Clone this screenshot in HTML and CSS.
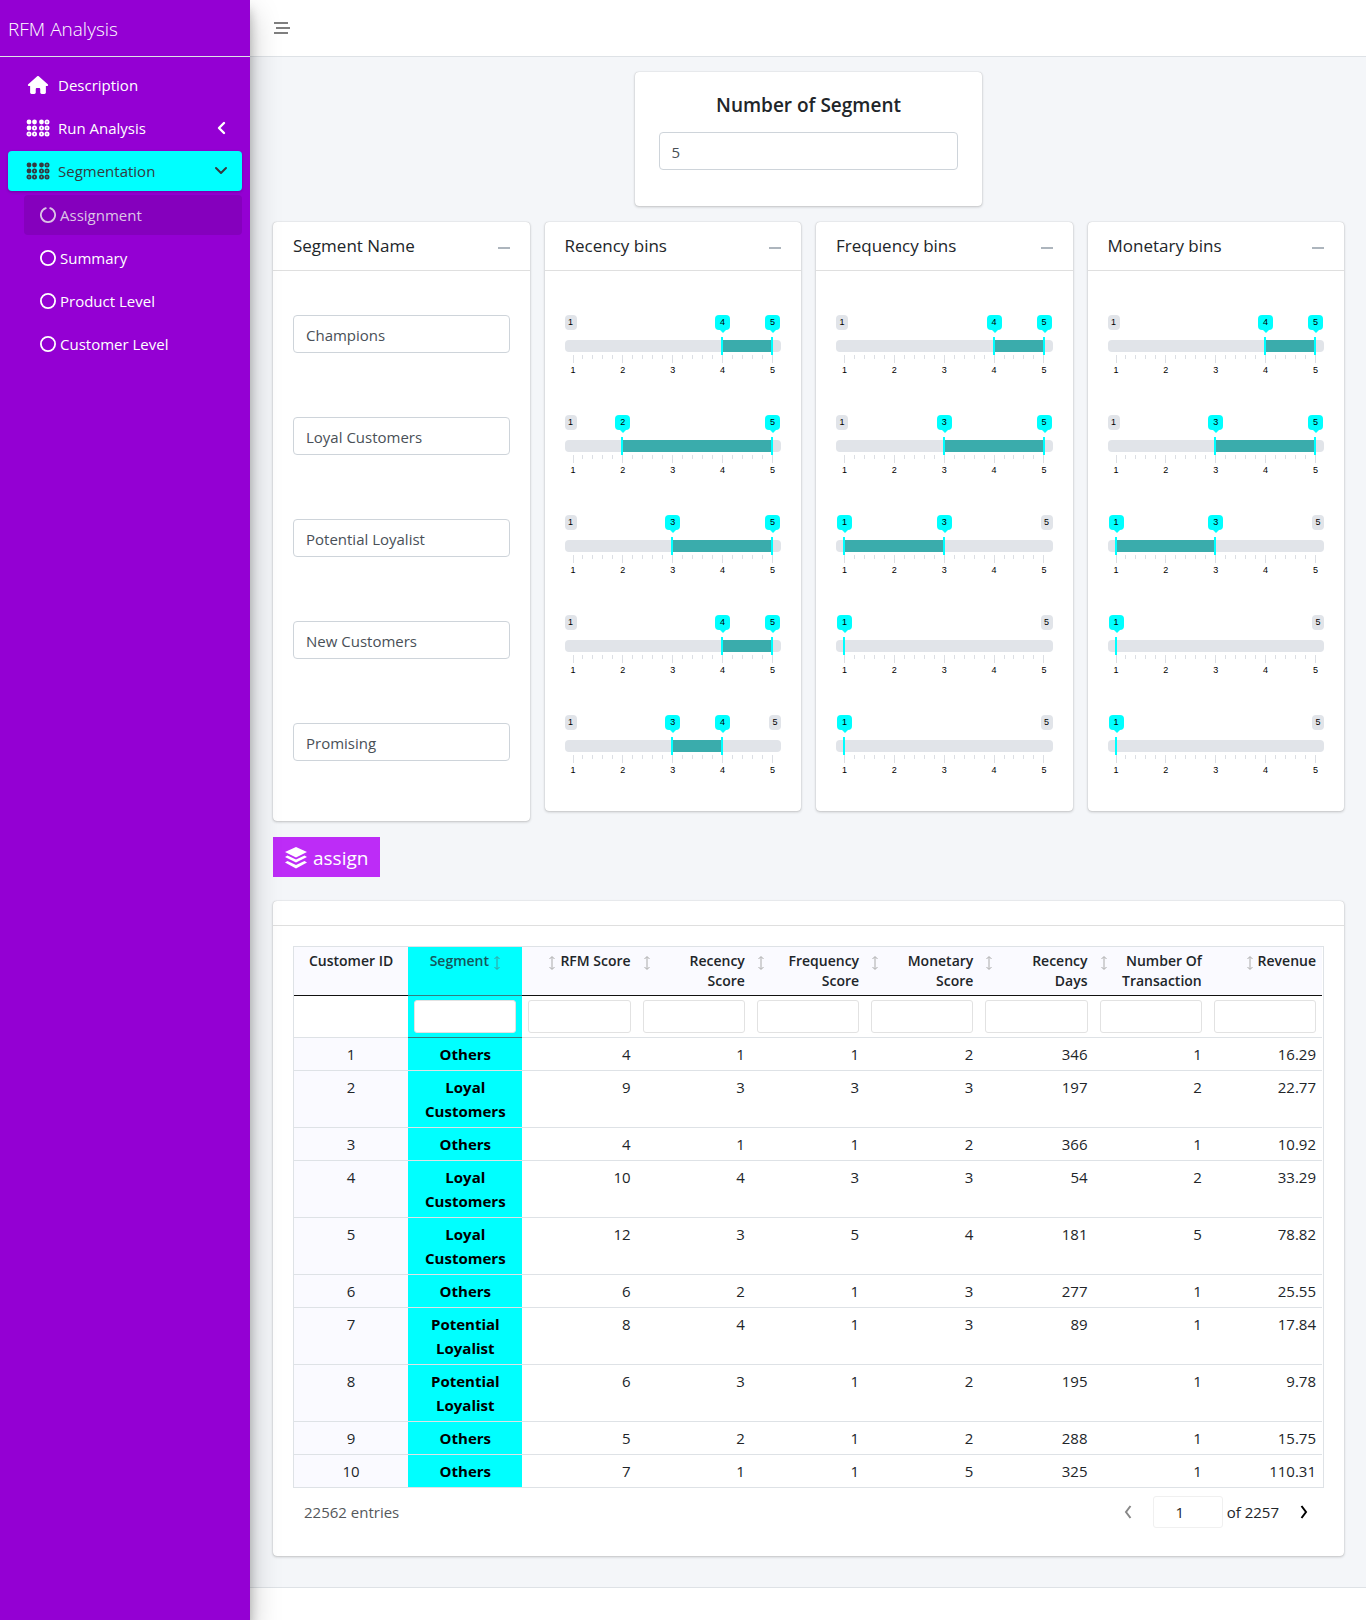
FILE: index.html
```html
<!DOCTYPE html>
<html lang="en">
<head>
<meta charset="utf-8">
<meta name="viewport" content="width=device-width, initial-scale=1">
<title>RFM Analysis</title>
<link rel="stylesheet" href="styles.css">
</head>
<body>
<svg class="sprite" aria-hidden="true">
  <symbol id="i-home" viewBox="0 0 576 512"><path d="M575.8 255.500c0 18-15 32.100-32 32.100h-32l.7 160.200c0 2.700-.2 5.400-.5 8.100V472c0 22.100-17.900 40-40 40H392c-22.100 0-40-17.900-40-40V376c0-17.700-14.300-32-32-32h-64c-17.700 0-32 14.300-32 32v96c0 22.100-17.900 40-40 40h-80c-22.100 0-40-17.900-40-40V287.600H32c-18 0-32-14-32-32.100 0-9 3-17 10-24L266.400 8c7-7 15-8 22-8s15 2 21 7l255.400 224.500c8 7 12 15 11 24z"/></symbol>
  <symbol id="i-left" viewBox="0 0 10 14"><path d="M8 2 3 7l5 5" fill="none" stroke="currentColor" stroke-width="2.400" stroke-linecap="round" stroke-linejoin="round"/></symbol>
  <symbol id="i-down" viewBox="0 0 14 10"><path d="m2 2 5 5 5-5" fill="none" stroke="currentColor" stroke-width="2" stroke-linecap="round" stroke-linejoin="round"/></symbol>
  <symbol id="i-circle" viewBox="0 0 16 16"><circle cx="8" cy="8" r="7.100" fill="none" stroke="currentColor" stroke-width="1.800"/></symbol>
  <symbol id="i-notch" viewBox="0 0 16 16"><path d="M5.800 1.200a7.100 7.100 0 1 0 4.400 0" fill="none" stroke="currentColor" stroke-width="1.800" stroke-linecap="round"/></symbol>
  <symbol id="i-braille" viewBox="0 0 24 18">
    <g fill="currentColor"><circle cx="3" cy="3" r="2.400"/><circle cx="8.500" cy="3" r="2.400"/><circle cx="15.500" cy="3" r="2.400"/><circle cx="3" cy="9" r="2.400"/></g>
    <g fill="none" stroke="currentColor" stroke-width="1.800"><circle cx="21" cy="3" r="1.600"/><circle cx="8.500" cy="9" r="1.600"/><circle cx="15.500" cy="9" r="1.600"/><circle cx="21" cy="9" r="1.600"/><circle cx="3" cy="15" r="1.600"/><circle cx="8.500" cy="15" r="1.600"/><circle cx="15.500" cy="15" r="1.600"/><circle cx="21" cy="15" r="1.600"/></g>
  </symbol>
  <symbol id="i-minus" viewBox="0 0 12 12"><path d="M0 6h12" stroke="currentColor" stroke-width="2"/></symbol>
  <symbol id="i-sort" viewBox="0 0 8 16"><path d="M4 2v12M1.500 4 4 1.500 6.500 4M1.500 12 4 14.500 6.500 12" fill="none" stroke="currentColor" stroke-width="1"/></symbol>
</svg>

<div class="layout">
  <aside class="sidebar">
    <a class="brand" href="#">RFM Analysis</a>
    <nav class="nav">
      <a class="nav-link" href="#"><svg class="nav-icon"><use href="#i-home"/></svg><span>Description</span></a>
      <a class="nav-link" href="#"><svg class="nav-icon"><use href="#i-braille"/></svg><span>Run Analysis</span><svg class="nav-arrow"><use href="#i-left"/></svg></a>
      <a class="nav-link is-open" href="#"><svg class="nav-icon"><use href="#i-braille"/></svg><span>Segmentation</span><svg class="nav-arrow"><use href="#i-down"/></svg></a>
      <div class="subnav">
        <a class="sub-link is-active" href="#"><svg><use href="#i-notch"/></svg>Assignment</a>
        <a class="sub-link" href="#"><svg><use href="#i-circle"/></svg>Summary</a>
        <a class="sub-link" href="#"><svg><use href="#i-circle"/></svg>Product Level</a>
        <a class="sub-link" href="#"><svg><use href="#i-circle"/></svg>Customer Level</a>
      </div>
    </nav>
  </aside>

  <div class="page">
    <header class="topbar">
      <button class="menu" type="button" aria-label="Toggle menu"><svg viewBox="0 0 16 14"><path d="M0 2h14M2 7h14M0 12h14" stroke="currentColor" stroke-width="2"/></svg></button>
    </header>

    <main class="main">
      <section class="card count-card">
        <label class="count-label" for="segments">Number of Segment</label>
        <input class="field" id="segments" type="text" inputmode="numeric" value="5">
      </section>

      <div class="bins">
        <section class="card">
          <div class="card-head"><h2>Segment Name</h2><button type="button" class="collapse" aria-label="Collapse"><svg><use href="#i-minus"/></svg></button></div>
          <div class="names">
            <input class="field" type="text" aria-label="Segment 1" value="Champions">
            <input class="field" type="text" aria-label="Segment 2" value="Loyal Customers">
            <input class="field" type="text" aria-label="Segment 3" value="Potential Loyalist">
            <input class="field" type="text" aria-label="Segment 4" value="New Customers">
            <input class="field" type="text" aria-label="Segment 5" value="Promising">
          </div>
        </section>
        <section class="card">
          <div class="card-head"><h2>Recency bins</h2><button type="button" class="collapse" aria-label="Collapse"><svg><use href="#i-minus"/></svg></button></div>
          <div class="sliders" data-name="Recency" data-ranges="4-5 2-5 3-5 4-5 3-4"></div>
        </section>
        <section class="card">
          <div class="card-head"><h2>Frequency bins</h2><button type="button" class="collapse" aria-label="Collapse"><svg><use href="#i-minus"/></svg></button></div>
          <div class="sliders" data-name="Frequency" data-ranges="4-5 3-5 1-3 1-1 1-1"></div>
        </section>
        <section class="card">
          <div class="card-head"><h2>Monetary bins</h2><button type="button" class="collapse" aria-label="Collapse"><svg><use href="#i-minus"/></svg></button></div>
          <div class="sliders" data-name="Monetary" data-ranges="4-5 3-5 1-3 1-1 1-1"></div>
        </section>
      </div>

      <button class="assign" type="button">
        <svg viewBox="0 0 22 22" fill="currentColor"><path d="M11 0 22 5 11 10.500 0 5z"/><path d="M2.500 8.500 11 12.500l8.500-4L22 10 11 15.500 0 10z"/><path d="M2.500 14 11 18l8.500-4L22 15.500 11 21.500 0 15.500z"/></svg>
        <span>assign</span>
      </button>

      <section class="card table-card">
        <div class="table-head"></div>
        <div class="table-body">
          <div class="frame">
            <table>
              <thead>
                <tr class="titles">
                  <th scope="col" class="id">Customer ID</th>
                  <th scope="col" class="seg"><button type="button"><span>Segment</span><svg><use href="#i-sort"/></svg></button></th>
                  <th scope="col"><button type="button"><svg><use href="#i-sort"/></svg><span>RFM Score</span></button></th>
                  <th scope="col"><button type="button"><svg><use href="#i-sort"/></svg><span>Recency Score</span></button></th>
                  <th scope="col"><button type="button"><svg><use href="#i-sort"/></svg><span>Frequency Score</span></button></th>
                  <th scope="col"><button type="button"><svg><use href="#i-sort"/></svg><span>Monetary Score</span></button></th>
                  <th scope="col"><button type="button"><svg><use href="#i-sort"/></svg><span>Recency Days</span></button></th>
                  <th scope="col"><button type="button"><svg><use href="#i-sort"/></svg><span>Number Of Transaction</span></button></th>
                  <th scope="col"><button type="button"><svg><use href="#i-sort"/></svg><span>Revenue</span></button></th>
                </tr>
                <tr class="filters">
                  <td></td>
                  <td class="seg"><input type="text" aria-label="Filter Segment"></td>
                  <td><input type="text" aria-label="Filter RFM Score"></td>
                  <td><input type="text" aria-label="Filter Recency Score"></td>
                  <td><input type="text" aria-label="Filter Frequency Score"></td>
                  <td><input type="text" aria-label="Filter Monetary Score"></td>
                  <td><input type="text" aria-label="Filter Recency Days"></td>
                  <td><input type="text" aria-label="Filter Number Of Transaction"></td>
                  <td><input type="text" aria-label="Filter Revenue"></td>
                </tr>
              </thead>
              <tbody>
                <tr><td class="id">1</td><td class="seg">Others</td><td>4</td><td>1</td><td>1</td><td>2</td><td>346</td><td>1</td><td>16.29</td></tr>
                <tr><td class="id">2</td><td class="seg">Loyal Customers</td><td>9</td><td>3</td><td>3</td><td>3</td><td>197</td><td>2</td><td>22.77</td></tr>
                <tr><td class="id">3</td><td class="seg">Others</td><td>4</td><td>1</td><td>1</td><td>2</td><td>366</td><td>1</td><td>10.92</td></tr>
                <tr><td class="id">4</td><td class="seg">Loyal Customers</td><td>10</td><td>4</td><td>3</td><td>3</td><td>54</td><td>2</td><td>33.29</td></tr>
                <tr><td class="id">5</td><td class="seg">Loyal Customers</td><td>12</td><td>3</td><td>5</td><td>4</td><td>181</td><td>5</td><td>78.82</td></tr>
                <tr><td class="id">6</td><td class="seg">Others</td><td>6</td><td>2</td><td>1</td><td>3</td><td>277</td><td>1</td><td>25.55</td></tr>
                <tr><td class="id">7</td><td class="seg">Potential Loyalist</td><td>8</td><td>4</td><td>1</td><td>3</td><td>89</td><td>1</td><td>17.84</td></tr>
                <tr><td class="id">8</td><td class="seg">Potential Loyalist</td><td>6</td><td>3</td><td>1</td><td>2</td><td>195</td><td>1</td><td>9.78</td></tr>
                <tr><td class="id">9</td><td class="seg">Others</td><td>5</td><td>2</td><td>1</td><td>2</td><td>288</td><td>1</td><td>15.75</td></tr>
                <tr><td class="id">10</td><td class="seg">Others</td><td>7</td><td>1</td><td>1</td><td>5</td><td>325</td><td>1</td><td>110.31</td></tr>
              </tbody>
            </table>
          </div>
          <div class="pager">
            <span class="entries">22562 entries</span>
            <button type="button" class="step" aria-label="Previous page" disabled><svg viewBox="0 0 8 14"><path d="M6.500 1 2 7l4.500 6" fill="none" stroke="currentColor" stroke-width="2"/></svg></button>
            <input type="text" id="page" inputmode="numeric" aria-label="Page" value="1">
            <label for="page">of 2257</label>
            <button type="button" class="step" aria-label="Next page"><svg viewBox="0 0 8 14"><path d="M1.500 1 6 7l-4.500 6" fill="none" stroke="currentColor" stroke-width="2"/></svg></button>
          </div>
        </div>
      </section>
    </main>
    <footer class="footer"></footer>
  </div>
</div>
<script src="script.js"></script>
</body>
</html>
```
FILE: styles.css
```css
* { box-sizing: border-box; }

body {
  margin: 0;
  font: 15px/24px "Open Sans", "Noto Sans", sans-serif;
  color: #212529;
  background: #f4f6f9;
}

button, input { font: inherit; color: inherit; }
button { border: 0; padding: 0; background: none; cursor: pointer; }
a { color: inherit; text-decoration: none; }
svg { display: block; flex: none; }
.sprite { position: absolute; width: 0; height: 0; }

.layout { display: flex; min-height: 100vh; }

/* Sidebar */
.sidebar {
  position: relative;
  z-index: 2;
  flex: 0 0 250px;
  color: #fff;
  background: #9400d3;
  box-shadow: 0 14px 28px rgba(0, 0, 0, .25), 0 10px 10px rgba(0, 0, 0, .22);
}
.brand {
  display: flex;
  align-items: center;
  height: 57px;
  padding: 2px 8px 0;
  border-bottom: 1px solid #dee2e6;
  font-size: 19px;
  font-weight: 300;
}
.nav { display: flex; flex-direction: column; gap: 3px; padding: 8px; }
.nav-link {
  display: flex;
  align-items: center;
  height: 40px;
  padding: 0 14px 0 18px;
  border-radius: 4px;
}
.nav-icon { width: 24px; height: 18px; margin-right: 8px; fill: currentColor; }
.nav-arrow { width: 14px; height: 14px; margin-left: auto; }
.nav-link.is-open {
  color: #343a40;
  background: #0ff;
  box-shadow: 0 1px 3px rgba(0, 0, 0, .24);
}
.subnav { display: flex; flex-direction: column; gap: 3px; padding: 1px 0 0 16px; }
.sub-link {
  display: flex;
  align-items: center;
  gap: 4px;
  height: 40px;
  padding: 0 16px;
  border-radius: 4px;
}
.sub-link svg { width: 16px; height: 16px; }
.sub-link.is-active { color: #dcc4e6; background: #8500bd; }

/* Page */
.page { flex: 1; min-width: 0; display: flex; flex-direction: column; }
.topbar {
  display: flex;
  align-items: center;
  height: 57px;
  padding: 0 24px;
  background: #fff;
  border-bottom: 1px solid #dee2e6;
}
.menu { color: #7f7f7f; }
.menu svg { width: 16px; height: 14px; }
.main { flex: 1; padding: 15px 22px 31px 23px; }
.footer { height: 33px; background: #fff; border-top: 1px solid #dee2e6; }

.card {
  background: #fff;
  border-radius: 4px;
  box-shadow: 0 0 1px rgba(0, 0, 0, .25), 0 1px 3px rgba(0, 0, 0, .2);
}
.field {
  display: block;
  width: 100%;
  height: 38px;
  padding: 2px 12px 0;
  border: 1px solid #ced4da;
  border-radius: 4px;
  background: #fff;
  color: #495057;
}

.count-card {
  width: calc(100% / 3 - 9px);
  margin: 0 auto 16px;
  padding: 21px 24px 36px;
}
.count-label {
  display: block;
  margin-bottom: 15px;
  text-align: center;
  font-size: 19px;
  font-weight: 600;
}

.bins {
  display: grid;
  grid-template-columns: repeat(4, minmax(0, 1fr));
  align-items: start;
  gap: 15px;
}
.card-head {
  display: flex;
  align-items: center;
  justify-content: space-between;
  height: 49px;
  padding: 0 20px;
  border-bottom: 1px solid #dfdfdf;
}
.card-head h2 { margin: 0; font-size: 17px; font-weight: 400; }
.collapse { padding-top: 4px; color: #adb5bd; }
.collapse svg { width: 12px; height: 12px; }
.names { display: grid; gap: 64px; padding: 44px 20px 60px; }

/* Range sliders */
.sliders { display: grid; gap: 40px; padding: 44px 20px 36px; }
.slider {
  height: 60px;
  font: 9px/12px "Liberation Sans", Arial, sans-serif;
  color: #000;
}
.badges {
  position: relative;
  display: flex;
  justify-content: space-between;
  height: 25px;
}
.limit {
  width: 12px;
  height: 15px;
  border-radius: 4px;
  background: #e1e4e9;
  line-height: 15px;
  text-align: center;
}
.limit.is-hidden { visibility: hidden; }
.values { position: absolute; inset: 0 9px 0 8px; }
.value {
  position: absolute;
  top: 0;
  width: 15px;
  height: 15px;
  margin-left: -7px;
  border-radius: 4px;
  background: #0ff;
  line-height: 15px;
  text-align: center;
}
.value::after {
  content: "";
  position: absolute;
  top: 15px;
  left: 5px;
  border: 3px solid transparent;
  border-top-color: #0ff;
  border-bottom: 0;
}
.track {
  position: relative;
  height: 12px;
  border-radius: 4px;
  background: #e1e4e9;
}
.span { position: absolute; inset: 0 9px 0 8px; }
.fill { position: absolute; top: 0; bottom: 0; background: #3aacac; }
.track input {
  position: absolute;
  top: -3px;
  left: 0;
  width: 100%;
  height: 18px;
  margin: 0;
  appearance: none;
  background: none;
  pointer-events: none;
}
.track input::-webkit-slider-thumb {
  appearance: none;
  width: 17px;
  height: 18px;
  background: linear-gradient(90deg, transparent 7px, #0ff 7px 9px, transparent 9px);
  pointer-events: auto;
}
.ticks {
  display: flex;
  justify-content: space-between;
  height: 9px;
  margin: 3px 8px 0;
}
.ticks i { width: 1px; height: 4px; background: #dcdfe4; }
.ticks i.major { height: 8px; }
.numbers { display: flex; justify-content: space-between; }
.numbers span { width: 17px; text-align: center; }

.assign {
  display: flex;
  align-items: center;
  gap: 6px;
  height: 40px;
  margin: 16px 0 24px;
  padding: 2px 12px 0;
  color: #fff;
  background: #bd2cf7;
  font-size: 19px;
}
.assign svg { width: 22px; height: 22px; }

/* Customer table */
.table-head { height: 25px; border-bottom: 1px solid #dfdfdf; }
.table-body { padding: 20px 20px 28px; }
.frame { padding-right: 1px; border: 1px solid #dee2e6; }
table { width: 100%; table-layout: fixed; border-collapse: separate; border-spacing: 0; }
th, td {
  padding: 4px 6px;
  border-bottom: 1px solid #dee2e6;
  text-align: right;
  vertical-align: top;
}
tbody tr:last-child td { border-bottom: 0; }
.titles th {
  height: 49px;
  background: #fafaff;
  border-bottom-color: #111;
  font-size: 14px;
  font-weight: 600;
  line-height: 20px;
}
.titles button {
  display: flex;
  justify-content: flex-end;
  gap: 4px;
  width: 100%;
  text-align: right;
}
.titles svg { width: 8px; height: 16px; margin-top: 4px; color: #aaa; }
.titles .seg button { justify-content: center; }
.titles .seg svg { color: #3a9a9a; }
.titles .id, .id { text-align: center; background: #fafaff; }
td.seg, .titles .seg { background: #0ff; text-align: center; }
.titles .seg { color: #15565a; border-bottom-color: #2f7f80; }
tbody .seg { color: #000; font-weight: 700; }
.filters td { height: 42px; padding: 4px 6px; }
.filters .seg { border-bottom-color: #2f7f80; }
.filters input {
  display: block;
  width: 100%;
  height: 33px;
  padding: 0 6px;
  border: 1px solid #e2e2e2;
  border-radius: 3px;
  background: #fff;
}
.pager { display: flex; align-items: center; height: 40px; padding: 8px 11px 0; }
.entries { margin-right: auto; color: #55585c; }
.pager input {
  width: 70px;
  height: 32px;
  margin: 0 4px 0 16px;
  padding: 0 16px 0 0;
  border: 1px solid #f0f0f0;
  border-radius: 3px;
  background: #fff;
  text-align: center;
}
.step { display: flex; padding: 0 5px; color: #000; }
.step:disabled { color: #888; }
.step svg { width: 8px; height: 14px; }
.pager label + .step { margin-left: 16px; }
```
FILE: script.js
```js
const MIN = 1;
const MAX = 5;
const percent = (v) => ((v - MIN) / (MAX - MIN)) * 100;

const ticks = Array.from({ length: 21 }, (_, i) => `<i${i % 5 ? "" : ' class="major"'}></i>`).join("");
const numbers = [1, 2, 3, 4, 5].map((n) => `<span>${n}</span>`).join("");

function slider(name, row, from, to) {
  const values = from === to ? [from] : [from, to];
  const badges = values.map((v) => `<span class="value" style="left:${percent(v)}%">${v}</span>`).join("");
  return `<div class="slider">
    <div class="badges">
      <span class="limit${from === MIN ? " is-hidden" : ""}">${MIN}</span>
      <span class="limit${to === MAX ? " is-hidden" : ""}">${MAX}</span>
      <div class="values">${badges}</div>
    </div>
    <div class="track">
      <div class="span"><div class="fill" style="left:${percent(from)}%;width:${percent(to) - percent(from)}%"></div></div>
      <input type="range" min="${MIN}" max="${MAX}" value="${from}" aria-label="${name} from, segment ${row}">
      <input type="range" min="${MIN}" max="${MAX}" value="${to}" aria-label="${name} to, segment ${row}">
    </div>
    <div class="ticks">${ticks}</div>
    <div class="numbers">${numbers}</div>
  </div>`;
}

document.querySelectorAll(".sliders").forEach((el) => {
  el.innerHTML = el.dataset.ranges
    .split(" ")
    .map((range, i) => slider(el.dataset.name, i + 1, ...range.split("-").map(Number)))
    .join("");
});
```
